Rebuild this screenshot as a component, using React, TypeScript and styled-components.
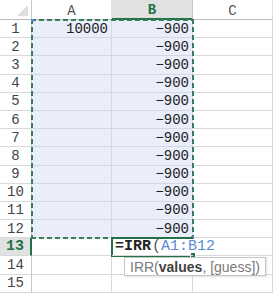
import React from "react";
import styled, { createGlobalStyle } from "styled-components";

const GlobalStyle = createGlobalStyle`
    html, body {
        margin: 0;
        padding: 0;
        background: #ffffff;
    }
`;

const green = "#217346";
const dash = "#3a7d55";
const gridLine = "#d9d9d9";
const selFill = "#e9eefa";

interface Pos {
    $r: number;
    $c: number;
}

const Sheet = styled.div`
    display: grid;
    grid-template-columns: 32px 80px 81px 80px;
    grid-template-rows: 20px repeat(15, 18.2px);
    width: 275px;
    height: 293px;
    overflow: hidden;
    font-family: "Liberation Mono", "DejaVu Sans Mono", monospace;
    font-size: 14px;
    color: #222;
`;

const Corner = styled.div`
    grid-column: 1;
    grid-row: 1;
    position: relative;
    border-right: 1px solid #c6c6c6;
    border-bottom: 1px solid #bdbdbd;
    box-sizing: border-box;
    &::after {
        content: "";
        position: absolute;
        right: 3px;
        bottom: 3px;
        width: 0;
        height: 0;
        border-left: 11px solid transparent;
        border-bottom: 11px solid #dedede;
    }
`;

const ColHead = styled.div<Pos & { $active?: boolean }>`
    grid-row: ${({ $r }) => $r};
    grid-column: ${({ $c }) => $c};
    display: flex;
    align-items: center;
    justify-content: center;
    box-sizing: border-box;
    border-right: 1px solid ${({ $active }) => ($active ? "#c4c4c4" : "#e0e0e0")};
    border-bottom: ${({ $active }) => ($active ? `2px solid ${green}` : "1px solid #bdbdbd")};
    background: ${({ $active }) => ($active ? "#e1e1e1" : "#ffffff")};
    color: ${({ $active }) => ($active ? green : "#555")};
    font-weight: ${({ $active }) => ($active ? "bold" : "normal")};
    padding-top: 2px;
`;

const RowHead = styled.div<Pos & { $active?: boolean }>`
    grid-row: ${({ $r }) => $r};
    grid-column: ${({ $c }) => $c};
    display: flex;
    align-items: center;
    justify-content: center;
    box-sizing: border-box;
    border-bottom: 1px solid ${gridLine};
    border-right: ${({ $active }) => ($active ? `2px solid ${green}` : "1px solid #c6c6c6")};
    background: ${({ $active }) => ($active ? "#e1e1e1" : "#ffffff")};
    color: ${({ $active }) => ($active ? green : "#444")};
    font-weight: ${({ $active }) => ($active ? "bold" : "normal")};
    font-size: ${({ $active }) => ($active ? "15px" : "14px")};
`;

const Cell = styled.div<Pos & { $selected?: boolean }>`
    grid-row: ${({ $r }) => $r};
    grid-column: ${({ $c }) => $c};
    display: flex;
    align-items: center;
    justify-content: flex-end;
    box-sizing: border-box;
    padding-right: 3px;
    border-right: 1px solid ${({ $selected }) => ($selected ? "#d3d8e2" : gridLine)};
    border-bottom: 1px solid ${({ $selected }) => ($selected ? "#d3d8e2" : gridLine)};
    background: ${({ $selected }) => ($selected ? selFill : "#ffffff")};
    white-space: nowrap;
`;

const EditCell = styled.div<Pos>`
    grid-row: ${({ $r }) => $r};
    grid-column: ${({ $c }) => $c};
    position: relative;
    z-index: 5;
    display: flex;
    align-items: center;
    box-sizing: border-box;
    padding-left: 3px;
    white-space: nowrap;
    overflow: visible;
    font-size: 15px;
    border-bottom: 1px solid ${gridLine};
`;

const Marquee = styled.div`
    grid-column: 2 / 4;
    grid-row: 2 / 14;
    position: relative;
    z-index: 2;
    pointer-events: none;
    margin: -1px -1px -1px -1px;
    background:
        repeating-linear-gradient(90deg, ${dash} 0 5px, transparent 5px 8px) top left / 100% 2px no-repeat,
        repeating-linear-gradient(90deg, ${dash} 0 5px, transparent 5px 8px) bottom left / 100% 2px no-repeat,
        repeating-linear-gradient(180deg, ${dash} 0 5px, transparent 5px 8px) top left / 2px 100% no-repeat,
        repeating-linear-gradient(180deg, ${dash} 0 5px, transparent 5px 8px) top right / 2px 100% no-repeat;
`;

const Handle = styled.span<{ $corner: "tl" | "br" }>`
    position: absolute;
    width: 3px;
    height: 3px;
    background: #5b8bd6;
    ${({ $corner }) => ($corner === "tl" ? "top: 0; left: 0;" : "bottom: 0; right: 0;")}
`;

const ActiveBox = styled.div`
    grid-column: 3;
    grid-row: 14;
    z-index: 4;
    pointer-events: none;
    margin: -1px 0 -1px -1px;
    border: 2px solid ${green};
    border-right: none;
    background: #ffffff;
    position: relative;
    &::after {
        content: "";
        position: absolute;
        right: -3px;
        bottom: -3px;
        width: 4px;
        height: 4px;
        background: ${green};
        border: 1px solid #fff;
    }
`;

const Fn = styled.span`
    font-weight: bold;
    color: #222;
`;

const Paren = styled.span`
    color: #555;
    margin-left: 1px;
`;

const Ref = styled.span`
    color: #5b8bd6;
`;

const Tip = styled.div`
    position: absolute;
    top: calc(100% + 2px);
    left: 12px;
    z-index: 6;
    height: 17px;
    padding: 0 5px;
    display: flex;
    align-items: center;
    background: #ffffff;
    border: 1px solid #c6c6c6;
    box-shadow: 1px 1px 2px rgba(0, 0, 0, 0.12);
    font-family: "Liberation Sans", Arial, sans-serif;
    font-size: 14px;
    color: #7a7a7a;
    & b {
        color: #444;
    }
`;

const rows = Array.from({ length: 15 }, (_, i) => i + 1);

export default function App() {
    return (
        <>
            <GlobalStyle />
            <Sheet>
                <Corner />
                <ColHead $r={1} $c={2}>A</ColHead>
                <ColHead $r={1} $c={3} $active>B</ColHead>
                <ColHead $r={1} $c={4}>C</ColHead>
                {rows.map((r) => {
                    const sel = r <= 12;
                    const gr = r + 1;
                    return (
                        <React.Fragment key={r}>
                            <RowHead $r={gr} $c={1} $active={r === 13}>{r}</RowHead>
                            <Cell $r={gr} $c={2} $selected={sel}>{r === 1 ? "10000" : ""}</Cell>
                            {r === 13 ? (
                                <EditCell $r={gr} $c={3}>
                                    <Fn>=IRR</Fn>
                                    <Paren>(</Paren>
                                    <Ref>A1:B12</Ref>
                                    <Tip>
                                        IRR(<b>values</b>, [guess])
                                    </Tip>
                                </EditCell>
                            ) : (
                                <Cell $r={gr} $c={3} $selected={sel}>{sel ? "−900" : ""}</Cell>
                            )}
                            <Cell $r={gr} $c={4} />
                        </React.Fragment>
                    );
                })}
                <Marquee>
                    <Handle $corner="tl" />
                    <Handle $corner="br" />
                </Marquee>
                <ActiveBox />
            </Sheet>
        </>
    );
}
